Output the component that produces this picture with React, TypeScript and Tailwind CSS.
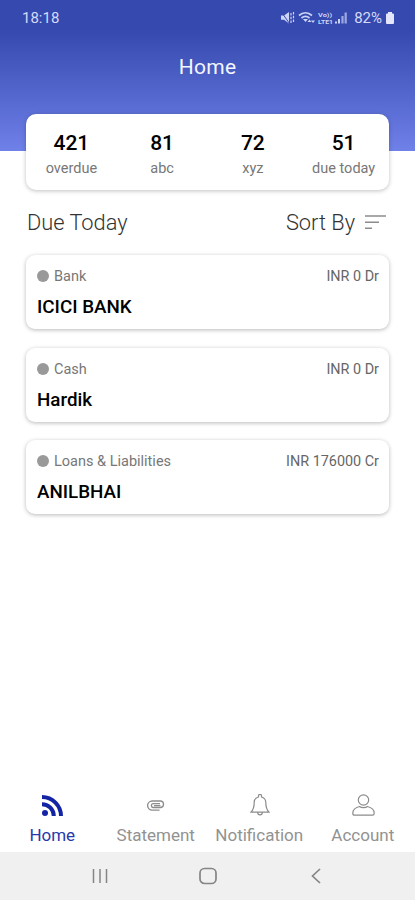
import React from 'react';

const stats = [
  { value: '421', label: 'overdue' },
  { value: '81', label: 'abc' },
  { value: '72', label: 'xyz' },
  { value: '51', label: 'due today' },
];

const accounts = [
  { group: 'Bank', name: 'ICICI BANK', balance: 'INR 0 Dr' },
  { group: 'Cash', name: 'Hardik', balance: 'INR 0 Dr' },
  { group: 'Loans & Liabilities', name: 'ANILBHAI', balance: 'INR 176000 Cr' },
];

const StatusIcons = () => (
  <svg width="68" height="14" viewBox="0 0 68 14" fill="none" className="text-[#ccd3f6]">
    {/* Muted / vibrate */}
    <path d="M1 4.500h3L9 1v11.500L4 8.800H1z" fill="currentColor" />
    <path d="M1 0.500l8.500 12" stroke="#3549ae" strokeWidth="1" />
    <path d="M11 2v2.500m0 1.200v2.500m0 1.200v2.500M13.500 1v2.500m0 1.200v2.500m0 1.200v2.500" stroke="currentColor" strokeWidth="1.200" />
    {/* Wifi */}
    <path d="M19 4.500c4-3.500 9-3.500 13 0M21.500 7c2.500-2 5.500-2 8 0" stroke="currentColor" strokeWidth="1.700" />
    <path d="M23 8h5l-2.500 3zM27.500 11l2-2.500 2 2.500zM31 9.500h4L33 12z" fill="currentColor" />
    {/* VoLTE */}
    <text x="38" y="5.800" fontSize="5.500" fontWeight="700" textLength="14" lengthAdjust="spacingAndGlyphs" fill="currentColor">Vo))</text>
    <text x="38" y="12.500" fontSize="5.500" fontWeight="700" textLength="15" lengthAdjust="spacingAndGlyphs" fill="currentColor">LTE1</text>
    {/* Signal */}
    <path d="M56 12.500v-2M59 12.500V8" stroke="currentColor" strokeWidth="2" />
    <path d="M62.500 12.500V5M65.700 12.500V1.500" stroke="currentColor" strokeOpacity=".7" strokeWidth="2.200" />
  </svg>
);

const StatusBar = () => (
  <div className="flex h-9 items-center justify-between pr-[21px] pl-[22px] text-[15px] text-[#d5dafa]">
    <span>18:18</span>
    <div className="flex items-center">
      <StatusIcons />
      <span className="ml-[6px]">82%</span>
      <svg width="8" height="12" viewBox="0 0 8 12" className="ml-[4px]">
        <path d="M2 0h4v1.500h1A1 1 0 0 1 8 2.500V11a1 1 0 0 1-1 1H1a1 1 0 0 1-1-1V2.500a1 1 0 0 1 1-1h1z" fill="#e3e6fb" />
      </svg>
    </div>
  </div>
);

const HomeIcon = () => (
  <svg width="21" height="21" viewBox="0 0 21 21" fill="none" stroke="#1324a4">
    <circle cx="3" cy="18" r="3" fill="#1324a4" stroke="none" />
    <path d="M0 2a19 19 0 0 1 19 19" strokeWidth="4" />
    <path d="M0 9.200A11.800 11.800 0 0 1 11.800 21" strokeWidth="4" />
  </svg>
);

const StatementIcon = () => (
  <svg width="18" height="11" viewBox="0 0 18 11" fill="none" stroke="#8c8c8c" strokeWidth="1.300">
    <path d="M14 7.500H6.300a1.900 1.900 0 0 1 0-3.800H13M5.200 10.200a4.500 4.500 0 0 1 0-9.200h8.600a3.300 3.300 0 0 1 0 6.500M5.200 10.200h7.300M7 5.600h6.500" />
  </svg>
);

const NotificationIcon = () => (
  <svg width="20" height="22" viewBox="0 0 20 22" fill="none" stroke="#8c8c8c" strokeWidth="1.200">
    <path d="M8.500 3V1.800a1.500 1.500 0 0 1 3 0V3c3 .8 4.300 3 4.300 5.500 0 5 .5 7 3.200 9.700H1c2.700-2.700 3.200-4.700 3.200-9.700C4.200 6 5.500 3.800 8.500 3zM7.700 18.500a2.300 2.300 0 0 0 4.600 0" />
  </svg>
);

const AccountIcon = () => (
  <svg width="23" height="22" viewBox="0 0 23 22" fill="none" stroke="#8c8c8c" strokeWidth="1.200">
    <circle cx="11.500" cy="6" r="5.200" />
    <path d="M7.500 12.500C3.500 13.500.8 16 .8 19.200c0 1.300.5 2 1.700 2h18c1.200 0 1.700-.7 1.700-2 0-3.200-2.700-5.700-6.700-6.700-2 1.500-6 1.500-8 0z" />
  </svg>
);

const tabs = [
  { label: 'Home', icon: HomeIcon, active: true },
  { label: 'Statement', icon: StatementIcon, active: false },
  { label: 'Notification', icon: NotificationIcon, active: false },
  { label: 'Account', icon: AccountIcon, active: false },
];

const App = () => {
  return (
    <div className="flex h-[900px] w-full flex-col overflow-hidden bg-white font-['Roboto',sans-serif]">
      <header className="h-[151px] shrink-0 bg-linear-to-b from-[#3549ae] from-20% to-[#7081ea]">
        <StatusBar />
        <h1 className="mt-[15px] text-center text-[21px] leading-8 tracking-[0.3px] text-[#f3f5ff]">Home</h1>
      </header>

      <main className="flex-1 px-[26px]">
        {/* Summary card overlaps the header */}
        <section className="relative -mt-[37px] grid h-[76px] grid-cols-4 rounded-[10px] bg-white pt-[17px] shadow-[0_1px_4px_rgba(0,0,0,0.25)]">
          {stats.map((stat) => (
            <div key={stat.label} className="text-center">
              <div className="text-[21px] leading-6 font-medium text-black">{stat.value}</div>
              <div className="mt-1 text-[14.5px] leading-5 text-[#777]">{stat.label}</div>
            </div>
          ))}
        </section>

        <div className="mt-[16px] flex h-8 items-center justify-between pl-px text-[21.8px] font-light text-[#333]">
          <h2 className="pt-[2px]">Due Today</h2>
          <div className="flex items-center gap-[10px] pr-[3px]">
            <span className="pt-[2px]">Sort By</span>
            <svg width="21" height="15" viewBox="0 0 21 15" stroke="#8c8c8c" strokeWidth="1.600">
              <path d="M0 1h21M0 7.300h14M0 13.300h7" />
            </svg>
          </div>
        </div>

        <ul className="mt-[17px] space-y-[18.5px]">
          {accounts.map((account) => (
            <li key={account.name} className="h-[74px] rounded-[9px] bg-white px-[11px] pt-[11px] shadow-[0_1px_4px_rgba(0,0,0,0.28)]">
              <div className="flex h-5 items-center text-[14.5px] text-[#777]">
                <span className="mr-[5px] size-3 rounded-full bg-[#999]" />
                <span className="pt-[2px]">{account.group}</span>
                <span className="-mr-px ml-auto pt-[2px] text-[14.4px] text-[#666]">{account.balance}</span>
              </div>
              <div className="mt-[9px] text-[18.8px] leading-6 font-medium text-black">{account.name}</div>
            </li>
          ))}
        </ul>
      </main>

      <nav className="grid h-[67px] shrink-0 grid-cols-4 pl-px">
        {tabs.map(({ label, icon: Icon, active }) => (
          <div key={label} className="flex flex-col items-center">
            <div className="flex h-10 items-center justify-center">
              <Icon />
            </div>
            <span className={active ? 'mr-px text-[17px] leading-5 text-[#2938ab]' : 'mr-px text-[17px] leading-5 text-[#929292]'}>
              {label}
            </span>
          </div>
        ))}
      </nav>

      {/* Android navigation buttons */}
      <footer className="flex h-12 shrink-0 items-center justify-center gap-[91px] bg-[#f0f0f0]">
        <svg width="16" height="16" viewBox="0 0 16 16" stroke="#858585" strokeWidth="1.500">
          <path d="M1.500 1v14M8 1v14M14.500 1v14" />
        </svg>
        <svg width="18" height="18" viewBox="0 0 18 18" fill="none" stroke="#858585" strokeWidth="1.700">
          <rect x="1" y="1.500" width="16" height="15" rx="4.500" />
        </svg>
        <svg width="16" height="18" viewBox="0 0 16 18" fill="none" stroke="#858585" strokeWidth="1.700">
          <path d="M12 2L4.500 9l7.500 7" />
        </svg>
      </footer>
    </div>
  );
};

export default App;
